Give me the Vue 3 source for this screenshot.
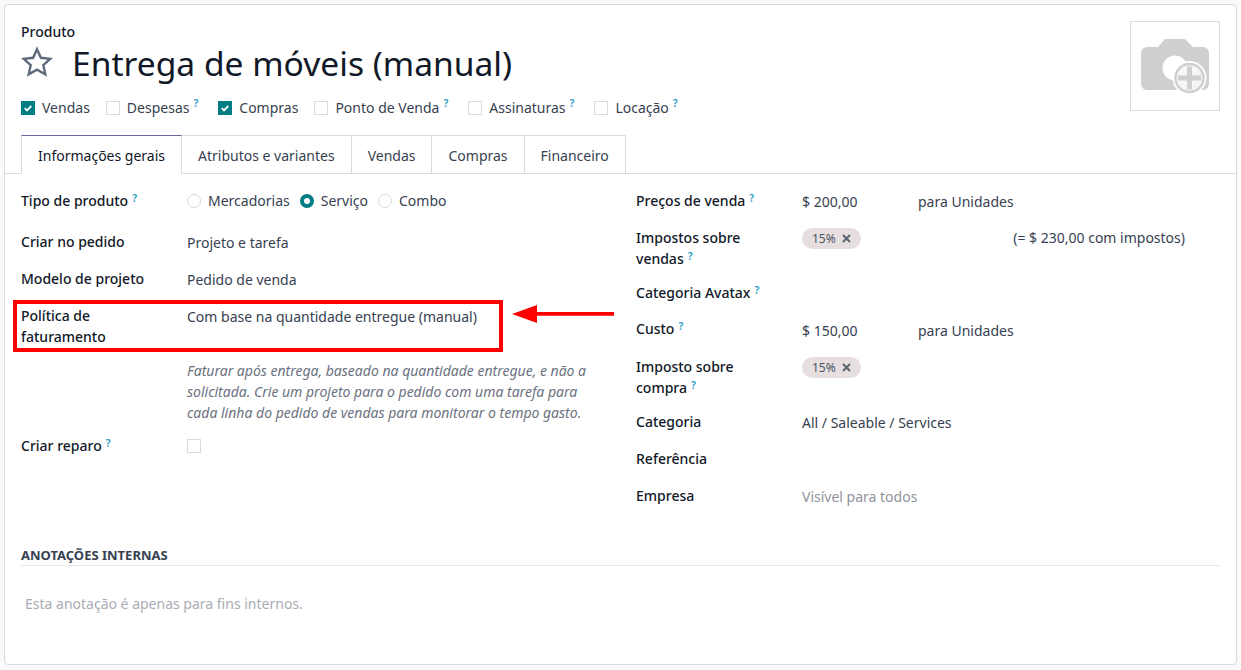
<script setup>
const modules = [
  { label: 'Vendas', checked: true },
  { label: 'Despesas', help: true },
  { label: 'Compras', checked: true },
  { label: 'Ponto de Venda', help: true },
  { label: 'Assinaturas', help: true },
  { label: 'Locação', help: true },
]
const tabs = ['Informações gerais', 'Atributos e variantes', 'Vendas', 'Compras', 'Financeiro']
</script>

<template>
  <div class="page">
    <main class="card">
      <header class="head">
        <div class="head-main">
          <div class="kicker">Produto</div>
          <div class="title-row">
            <svg class="star" width="32" height="32" viewBox="0 0 32 32" aria-hidden="true">
              <path d="M16 3.200l3.900 8.600 9.400 1-7 6.300 2 9.200-8.300-4.700-8.300 4.700 2-9.200-7-6.300 9.400-1z" fill="none" stroke="#5f6b7d" stroke-width="2.400" stroke-linejoin="miter"/>
            </svg>
            <h1>Entrega de móveis (manual)</h1>
          </div>
          <div class="modules">
            <label v-for="m in modules" :key="m.label" class="mod">
              <span class="box" :class="{ on: m.checked }">
                <svg v-if="m.checked" width="14" height="14" viewBox="0 0 14 14"><path d="M3.700 7.200l2.300 2.200 4.300-4.400" fill="none" stroke="#fff" stroke-width="1.800"/></svg>
              </span>
              <span>{{ m.label }}</span><sup v-if="m.help" class="q">?</sup>
            </label>
          </div>
        </div>
        <div class="photo">
          <svg width="88" height="88" viewBox="0 0 88 88" aria-hidden="true">
            <path d="M16 25h11l7-8h20l8 8h10a6 6 0 0 1 6 6v31a6 6 0 0 1-6 6H16a6 6 0 0 1-6-6V31a6 6 0 0 1 6-6z" fill="#cfcfcf"/>
            <circle cx="44" cy="46" r="12.500" fill="#fff"/>
            <circle cx="58.500" cy="56" r="17" fill="#fff"/>
            <circle cx="58.500" cy="56" r="14" fill="#f6f6f6" stroke="#cfcfcf" stroke-width="2.500"/>
            <rect x="56" y="44.500" width="5" height="23" fill="#cfcfcf"/>
            <rect x="47" y="53.500" width="23" height="5" fill="#cfcfcf"/>
          </svg>
        </div>
      </header>

      <nav class="tabs">
        <div v-for="(t, i) in tabs" :key="t" class="tab" :class="{ active: i === 0 }">{{ t }}</div>
      </nav>

      <section class="form">
        <div class="col">
          <div class="row r1">
            <div class="lab">Tipo de produto<sup class="q">?</sup></div>
            <div class="radios">
              <span class="radio"><i class="dot"></i>Mercadorias</span>
              <span class="radio"><i class="dot on"></i>Serviço</span>
              <span class="radio"><i class="dot"></i>Combo</span>
            </div>
          </div>
          <div class="row r2"><div class="lab">Criar no pedido</div><div class="val">Projeto e tarefa</div></div>
          <div class="row r3"><div class="lab">Modelo de projeto</div><div class="val">Pedido de venda</div></div>
          <div class="row r4"><div class="lab">Política de faturamento</div><div class="val">Com base na quantidade entregue (manual)</div></div>
          <p class="note">Faturar após entrega, baseado na quantidade entregue, e não a solicitada. Crie um projeto para o pedido com uma tarefa para cada linha do pedido de vendas para monitorar o tempo gasto.</p>
          <div class="row r5"><div class="lab">Criar reparo<sup class="q">?</sup></div><div class="val"><span class="box solo"></span></div></div>
        </div>

        <div class="col right">
          <div class="row rr first"><div class="lab">Preços de venda<sup class="q">?</sup></div><div class="val money"><span class="amount">$ 200,00</span><span>para Unidades</span></div></div>
          <div class="row rr two"><div class="lab">Impostos sobre vendas<sup class="q">?</sup></div><div class="tagline"><span class="tag">15%<svg width="9" height="9" viewBox="0 0 9 9"><path d="M1 1l7 7M8 1L1 8" stroke="#5b6470" stroke-width="2"/></svg></span><span class="incl">(= $ 230,00 com impostos)</span></div></div>
          <div class="row rr av"><div class="lab wide">Categoria Avatax<sup class="q">?</sup></div></div>
          <div class="row rr cu"><div class="lab">Custo<sup class="q">?</sup></div><div class="val money"><span class="amount">$ 150,00</span><span>para Unidades</span></div></div>
          <div class="row rr two"><div class="lab">Imposto sobre compra<sup class="q">?</sup></div><div class="tagline"><span class="tag">15%<svg width="9" height="9" viewBox="0 0 9 9"><path d="M1 1l7 7M8 1L1 8" stroke="#5b6470" stroke-width="2"/></svg></span></div></div>
          <div class="row rr cat"><div class="lab">Categoria</div><div class="val">All / Saleable / Services</div></div>
          <div class="row rr"><div class="lab">Referência</div></div>
          <div class="row rr"><div class="lab">Empresa</div><div class="val muted">Visível para todos</div></div>
        </div>

        <div class="mark"></div>
        <svg class="arrow" width="104" height="20" viewBox="0 0 104 20" aria-hidden="true">
          <path d="M0 10L25 1v7h77v3.700H25V19z" fill="#f00"/>
        </svg>
      </section>

      <section class="notes">
        <h2>ANOTAÇÕES INTERNAS</h2>
        <p>Esta anotação é apenas para fins internos.</p>
      </section>
    </main>
  </div>
</template>

<style>
html, body { margin: 0; background: #f9fafb; }
</style>

<style scoped>
.page {
  height: 670px;
  box-sizing: border-box;
  padding: 4px;
  background: #f9fafb;
  font-family: "Noto Sans", sans-serif;
  font-size: 14px;
  line-height: 21px;
  color: #374151;
  overflow: hidden;
}
.card {
  box-sizing: border-box;
  height: 661px;
  background: #fff;
  border: 1px solid #d8dadd;
  border-radius: 4px;
}
.head {
  display: flex;
  justify-content: space-between;
  padding: 16px 16px 0;
  height: 130px;
  box-sizing: border-box;
}
.kicker { color: #111827; font-weight: 500; }
.title-row { display: flex; align-items: center; height: 44px; margin-top: -1px; }
.star { width: 32px; height: 32px; margin-right: 19px; margin-top: -2px; }
h1 { margin: 0; font-size: 33.600px; line-height: 44px; font-weight: 400; color: #111827; }
.modules { display: flex; margin-top: 12px; }
.mod { display: flex; align-items: center; margin-right: 16px; height: 21px; }
.box {
  box-sizing: border-box;
  display: inline-flex;
  width: 14px;
  height: 14px;
  border: 1px solid #d8dadd;
  margin-right: 7px;
  background: #fff;
  flex: none;
}
.box.on { background: #017e84; border-color: #017e84; }
.box.on svg { margin: -1px; }
.box.solo { margin: 0; display: block; margin-top: 3px; }
.q {
  font-size: 10.500px;
  line-height: 1;
  color: #1f9bc2;
  font-weight: 600;
  margin-left: 4px;
  position: relative;
  top: 2px;
  vertical-align: super;
  align-self: flex-start;
}
.mod .q { top: 1px; margin-left: 4px; margin-right: 4px; vertical-align: baseline; }
.photo {
  box-sizing: border-box;
  width: 90px;
  height: 90px;
  border: 1px solid #d8dadd;
}
.photo svg { display: block; }
.tabs {
  display: flex;
  height: 39px;
  padding-left: 16px;
  border-bottom: 1px solid #d8dadd;
  box-sizing: border-box;
}
.tab {
  box-sizing: border-box;
  height: 39px;
  padding: 9px 16px 0;
  border: 1px solid #d8dadd;
  border-left: 0;
  color: #374151;
  white-space: nowrap;
}
.tab.active {
  border-left: 1px solid #d8dadd;
  border-top-color: #71639e;
  border-bottom: 0;
  background: #fff;
  color: #111827;
  position: relative;
  z-index: 1;
}
.form {
  position: relative;
  display: grid;
  grid-template-columns: 592px 583px;
  column-gap: 23px;
  padding: 16px 16px 0;
  height: 371px;
  box-sizing: border-box;
}
.row { display: grid; grid-template-columns: 166px 1fr; }
.lab { color: #111827; font-weight: 500; padding-right: 30px; }
.lab.wide { padding-right: 0; white-space: nowrap; }
.r1 { height: 21px; margin-bottom: 20px; }
.r2 { height: 21px; margin-bottom: 16px; }
.r3 { height: 21px; margin-bottom: 16px; }
.r4 { height: 42px; margin-bottom: 13px; }
.r4 .lab { padding-right: 60px; }
.val { color: #374151; margin-top: 1px; }
.radios { display: flex; }
.radio { display: flex; align-items: center; margin-right: 10px; }
.dot {
  box-sizing: border-box;
  width: 14px;
  height: 14px;
  border-radius: 50%;
  border: 1px solid #d8dadd;
  margin-right: 7px;
  background: #fff;
}
.dot.on { border: 4px solid #017e84; }
.note {
  margin: 0 0 12px 166px;
  width: 406px;
  font-style: italic;
  color: #6b7280;
}
.rr { margin-bottom: 16px; min-height: 21px; }
.rr.first { margin-bottom: 15px; }
.rr.two { margin-bottom: 13px; }
.rr.av { margin-bottom: 15px; }
.rr.cu { margin-bottom: 15px; }
.rr.cu .val { margin-top: 2px; }
.rr.cat { margin-bottom: 15px; }
.money { display: grid; grid-template-columns: 116px 1fr; }
.tagline { display: flex; justify-content: space-between; align-items: flex-start; padding-right: 34px; margin-top: 1px; }
.incl { margin-top: -1px; }
.tag {
  display: inline-flex;
  align-items: center;
  gap: 6px;
  height: 21px;
  line-height: 21px;
  padding: 0 10px;
  border-radius: 11px;
  background: #e7dfdf;
  color: #4b5563;
  font-size: 12px;
}
.incl { color: #374151; }
.muted { color: #8f949c; }
.mark {
  position: absolute;
  left: 8px;
  top: 126px;
  width: 490px;
  height: 52px;
  box-sizing: border-box;
  border: 4px solid #f00;
}
.arrow { position: absolute; left: 507px; top: 130px; }
.notes { padding: 0 16px; }
h2 {
  margin: 0;
  font-size: 13px;
  line-height: 21px;
  height: 20px;
  font-weight: 700;
  color: #374151;
  border-bottom: 1px solid #e5e7eb;
}
.notes p { margin: 27px 0 0 4px; color: #a9adb4; }
</style>
